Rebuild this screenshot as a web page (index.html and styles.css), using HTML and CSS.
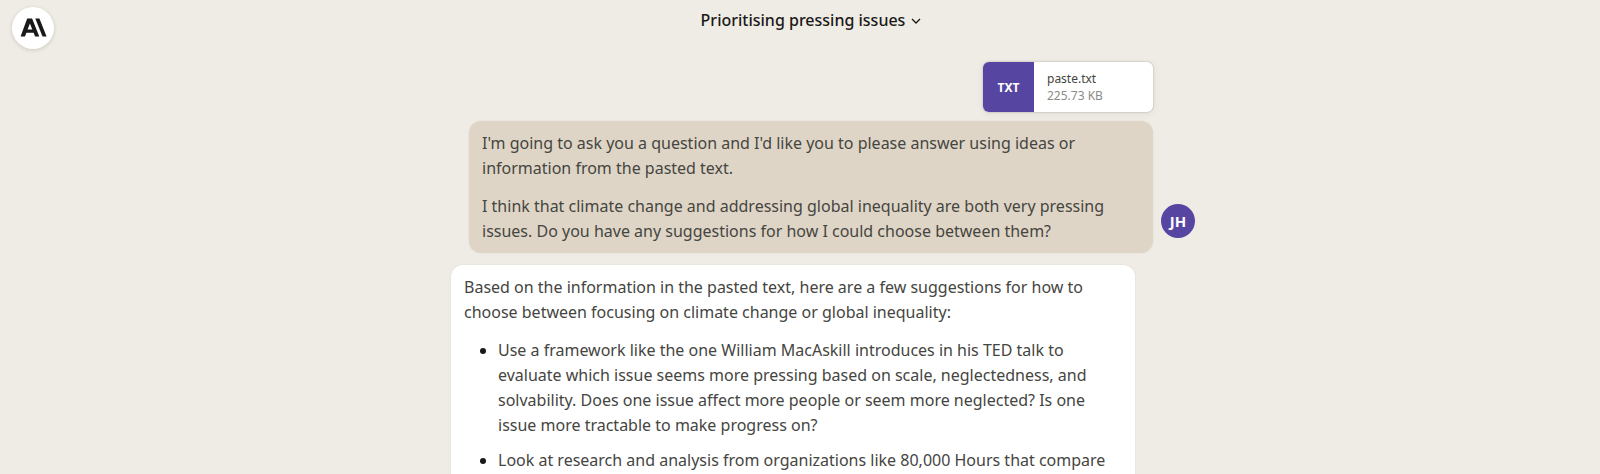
FILE: index.html
```
<!DOCTYPE html>
<html lang="en">
<head>
<meta charset="utf-8">
<title>Prioritising pressing issues</title>
<link rel="stylesheet" href="styles.css">
</head>
<body>

<header class="header">
  <a class="logo" href="#" aria-label="Home">
    <svg viewBox="0 0 42 42" aria-hidden="true">
      <path fill-rule="evenodd" d="M15.2 11.6h4.9l7.2 18h-4.2l-1.5-3.9h-7.2l-1.5 3.9H8.6zM17.9 16.4l-2.3 6h4.7z"/>
      <path d="M23.3 11.6h4.1l7.2 18h-4.1z"/>
    </svg>
  </a>
  <div class="titleContainer">
    <button class="title-button">
      Prioritising pressing issues
      <svg class="chevron" viewBox="0 0 10 6" aria-hidden="true"><path d="M1 1l4 4 4-4"/></svg>
    </button>
  </div>
</header>

<main class="chat">
  <!-- attached file -->
  <a class="attachment" href="#">
    <span class="attachment-type">TXT</span>
    <span class="attachment-info">
      <span class="attachment-name">paste.txt</span>
      <span class="attachment-size">225.73 KB</span>
    </span>
  </a>

  <!-- user message -->
  <div class="messageContainer">
    <div class="message user">
      <p>I'm going to ask you a question and I'd like you to please answer using ideas or information from the pasted text.</p>
      <p>I think that climate change and addressing global inequality are both very pressing issues. Do you have any suggestions for how I could choose between them?</p>
    </div>
    <div class="avatar">JH</div>
  </div>

  <!-- reply -->
  <div class="message reply">
    <p>Based on the information in the pasted text, here are a few suggestions for how to choose between focusing on climate change or global inequality:</p>
    <ul>
      <li>Use a framework like the one William MacAskill introduces in his TED talk to evaluate which issue seems more pressing based on scale, neglectedness, and solvability. Does one issue affect more people or seem more neglected? Is one issue more tractable to make progress on?</li>
      <li>Look at research and analysis from organizations like 80,000 Hours that compare</li>
    </ul>
  </div>
</main>

</body>
</html>
```
FILE: styles.css
```
:root {
  --bg-color: #efece5;
  --text-color: #454541;
  --title-color: #1a1918;
  --muted-color: #8b8b88;
  --accent: #5645a1;
  --user-bg: #dfd5c6;
}

* {
  box-sizing: border-box;
}

body {
  margin: 0;
  background-color: var(--bg-color);
  color: var(--text-color);
  font-family: "Noto Sans", sans-serif;
  font-size: 16px;
  line-height: 25px;
}

.header {
  display: flex;
  align-items: flex-start;
  padding: 7px 32px 0 12px;
}

.logo {
  width: 42px;
  height: 42px;
  border-radius: 50%;
  background-color: #ffffff;
  box-shadow: 0 1px 4px rgba(0, 0, 0, 0.15);
}

.logo svg {
  display: block;
  fill: #191919;
}

.titleContainer {
  flex: 1;
  display: flex;
  justify-content: center;
}

.title-button {
  display: flex;
  align-items: center;
  gap: 6px;
  padding: 1px 0 0;
  border: none;
  background: none;
  color: var(--title-color);
  font: inherit;
  font-weight: 500;
}

.chevron {
  width: 10px;
  height: 6px;
  fill: none;
  stroke: currentColor;
  stroke-width: 1.3;
}

.chat {
  display: flex;
  flex-direction: column;
  max-width: 790px;
  margin: 0 auto;
  padding: 13px 0 0 46px;
}

.attachment {
  display: flex;
  align-self: flex-end;
  width: 170px;
  height: 50px;
  margin-right: 42px;
  border-radius: 6px;
  overflow: hidden;
  background-color: #ffffff;
  color: var(--text-color);
  text-decoration: none;
  font-size: 12px;
  line-height: 17px;
  box-shadow: 0 0 2px rgba(0, 0, 0, 0.3), 0 2px 8px rgba(0, 0, 0, 0.06);
}

.attachment-type {
  display: flex;
  align-items: center;
  justify-content: center;
  width: 51px;
  background-color: var(--accent);
  color: #ffffff;
  font-weight: 700;
}

.attachment-info {
  display: flex;
  flex-direction: column;
  justify-content: center;
  padding-left: 13px;
}

.attachment-size {
  color: var(--muted-color);
}

.messageContainer {
  display: flex;
  align-items: flex-end;
  justify-content: flex-end;
  gap: 8px;
  margin-top: 9px;
}

.message {
  width: 100%;
  max-width: 684px;
  padding: 10px 13px 9px;
  border-radius: 12px;
  box-shadow: 0 0 2px rgba(0, 0, 0, 0.08);
}

.message p {
  margin: 0 0 13px;
}

.message p:last-child {
  margin-bottom: 0;
}

.user {
  background-color: var(--user-bg);
}

.reply {
  margin-top: 12px;
  background-color: #ffffff;
}

.reply ul {
  margin: 0;
  padding-left: 34px;
}

.reply li {
  margin-bottom: 10px;
}

.reply li::marker {
  color: var(--title-color);
}

.avatar {
  flex: none;
  width: 34px;
  height: 34px;
  margin-bottom: 15px;
  border-radius: 50%;
  background-color: var(--accent);
  color: #ffffff;
  font-size: 15px;
  font-weight: 700;
  line-height: 34px;
  text-align: center;
}
```
